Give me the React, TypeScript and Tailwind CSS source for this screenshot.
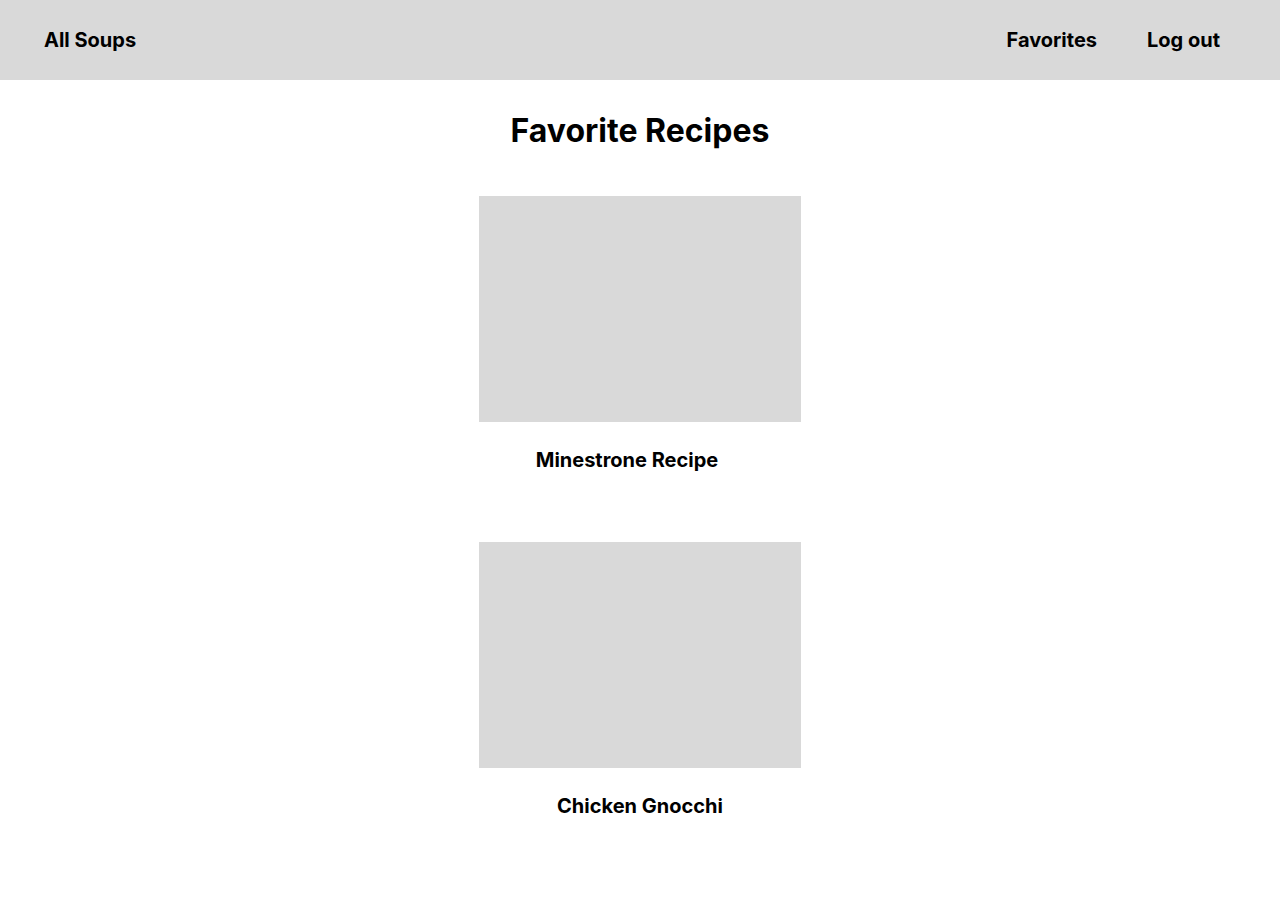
import React from "react";

const recipes = [
  { name: "Minestrone Recipe", shift: "pr-[26px]" },
  { name: "Chicken Gnocchi", shift: "" },
];

export default function App() {
  return (
    <div className="min-h-[900px] bg-white text-black font-['Inter',sans-serif]">
      <nav className="flex h-[80px] items-center justify-between bg-[#d9d9d9] pl-[44px] pr-[60px] text-[20px] font-bold">
        <a href="#">All Soups</a>
        <div className="flex items-center gap-[50px]">
          <a href="#">Favorites</a>
          <a href="#">Log out</a>
        </div>
      </nav>

      <main className="flex flex-col items-center">
        <h1 className="mt-[31px] mb-[45px] text-[32px] leading-[40px] font-bold">Favorite Recipes</h1>
        <div className="flex flex-col items-center gap-[68px]">
          {recipes.map((r) => (
            <div key={r.name} className="flex w-[322px] flex-col items-center">
              <div className="h-[226px] w-[322px] bg-[#d9d9d9]" />
              <p className={`mt-6 text-[20px] leading-[28px] font-bold ${r.shift}`}>{r.name}</p>
            </div>
          ))}
        </div>
      </main>
    </div>
  );
}
